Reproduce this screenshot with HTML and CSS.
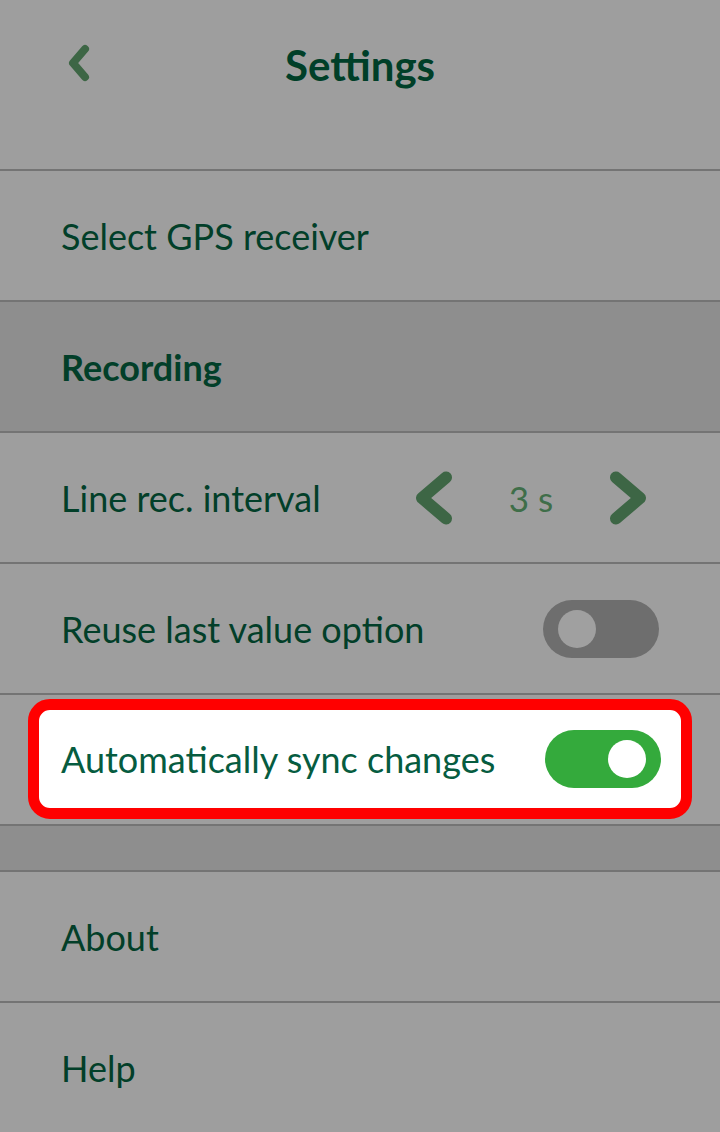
FILE: index.html
```html
<!DOCTYPE html>
<html>
<head>
<meta charset="utf-8">
<link rel="stylesheet" href="styles.css">
</head>
<body>
<div class="screen">
  <header class="topbar">
    <svg class="back" width="30" height="40" viewBox="0 0 30 40"><path d="M21 6 L9 20 L21 34" fill="none" stroke="#3d6645" stroke-width="8" stroke-linecap="round" stroke-linejoin="round"/></svg>
    <h1 class="title">Settings</h1>
  </header>
  <div class="row"><span class="label">Select GPS receiver</span></div>
  <div class="row section"><span class="label bold">Recording</span></div>
  <div class="row">
    <span class="label">Line rec. interval</span>
    <div class="stepper">
      <svg class="chev" width="44" height="60" viewBox="0 0 44 60"><path d="M34 9.5 L10 30 L34 50.5" fill="none" stroke="#3d6645" stroke-width="12" stroke-linecap="round" stroke-linejoin="round"/></svg>
      <span class="value">3 s</span>
      <svg class="chev" width="44" height="60" viewBox="0 0 44 60"><path d="M10 9.5 L34 30 L10 50.5" fill="none" stroke="#3d6645" stroke-width="12" stroke-linecap="round" stroke-linejoin="round"/></svg>
    </div>
  </div>
  <div class="row">
    <span class="label">Reuse last value option</span>
    <div class="toggle off"><span class="knob"></span></div>
  </div>
  <div class="row hl-row">
    <div class="highlight">
      <span class="label bright">Automatically sync changes</span>
      <div class="toggle on"><span class="knob"></span></div>
    </div>
  </div>
  <div class="row section spacer"></div>
  <div class="row"><span class="label">About</span></div>
  <div class="row last"><span class="label">Help</span></div>
</div>
</body>
</html>
```
FILE: styles.css
```css
html, body {
  margin: 0;
  padding: 0;
  background: #9e9e9e;
}
body {
  font-family: Lato, "Noto Sans", sans-serif;
}
.screen {
  width: 720px;
  height: 1132px;
  overflow: hidden;
  background: #9e9e9e;
}
.topbar {
  height: 169px;
  border-bottom: 2px solid #747474;
  position: relative;
  display: flex;
  justify-content: center;
}
.back {
  position: absolute;
  left: 64px;
  top: 43px;
}
.title {
  margin: 0;
  margin-top: 39px;
  font-size: 42px;
  font-weight: 700;
  color: #003f28;
  line-height: 52px;
  height: 52px;
}
.row {
  height: 129px;
  border-bottom: 2px solid #747474;
  display: flex;
  align-items: center;
  padding: 0 61px;
  box-sizing: content-box;
}
.row.last {
  border-bottom: none;
}
.section {
  background: #8e8e8e;
}
.spacer {
  height: 44px;
}
.label {
  font-size: 36px;
  color: #023f29;
  flex: 1;
}
.label.bold {
  font-weight: 700;
}
.stepper {
  display: flex;
  align-items: center;
  margin-right: 9px;
}
.value {
  font-size: 35px;
  color: #3f6e49;
  width: 150px;
  text-align: center;
}
.chev {
  display: block;
}
.toggle {
  width: 116px;
  height: 58px;
  border-radius: 29px;
  display: flex;
  align-items: center;
  box-sizing: border-box;
  flex: none;
}
.toggle .knob {
  width: 38px;
  height: 38px;
  border-radius: 50%;
  display: block;
}
.toggle.off {
  background: #6e6e6e;
  padding-left: 15px;
}
.toggle.off .knob {
  background: #a0a0a0;
}
.toggle.on {
  background: #34aa3c;
  justify-content: flex-end;
  padding-right: 15px;
}
.toggle.on .knob {
  background: #ffffff;
}
.hl-row {
  padding: 0 28px;
}
.highlight {
  flex: 1;
  height: 120px;
  margin-top: -2px;
  box-sizing: border-box;
  border: 11px solid #ff0000;
  border-radius: 22px;
  background: #ffffff;
  display: flex;
  align-items: center;
  padding: 0 20px 0 22px;
}
.label.bright {
  color: #065c40;
}
```
